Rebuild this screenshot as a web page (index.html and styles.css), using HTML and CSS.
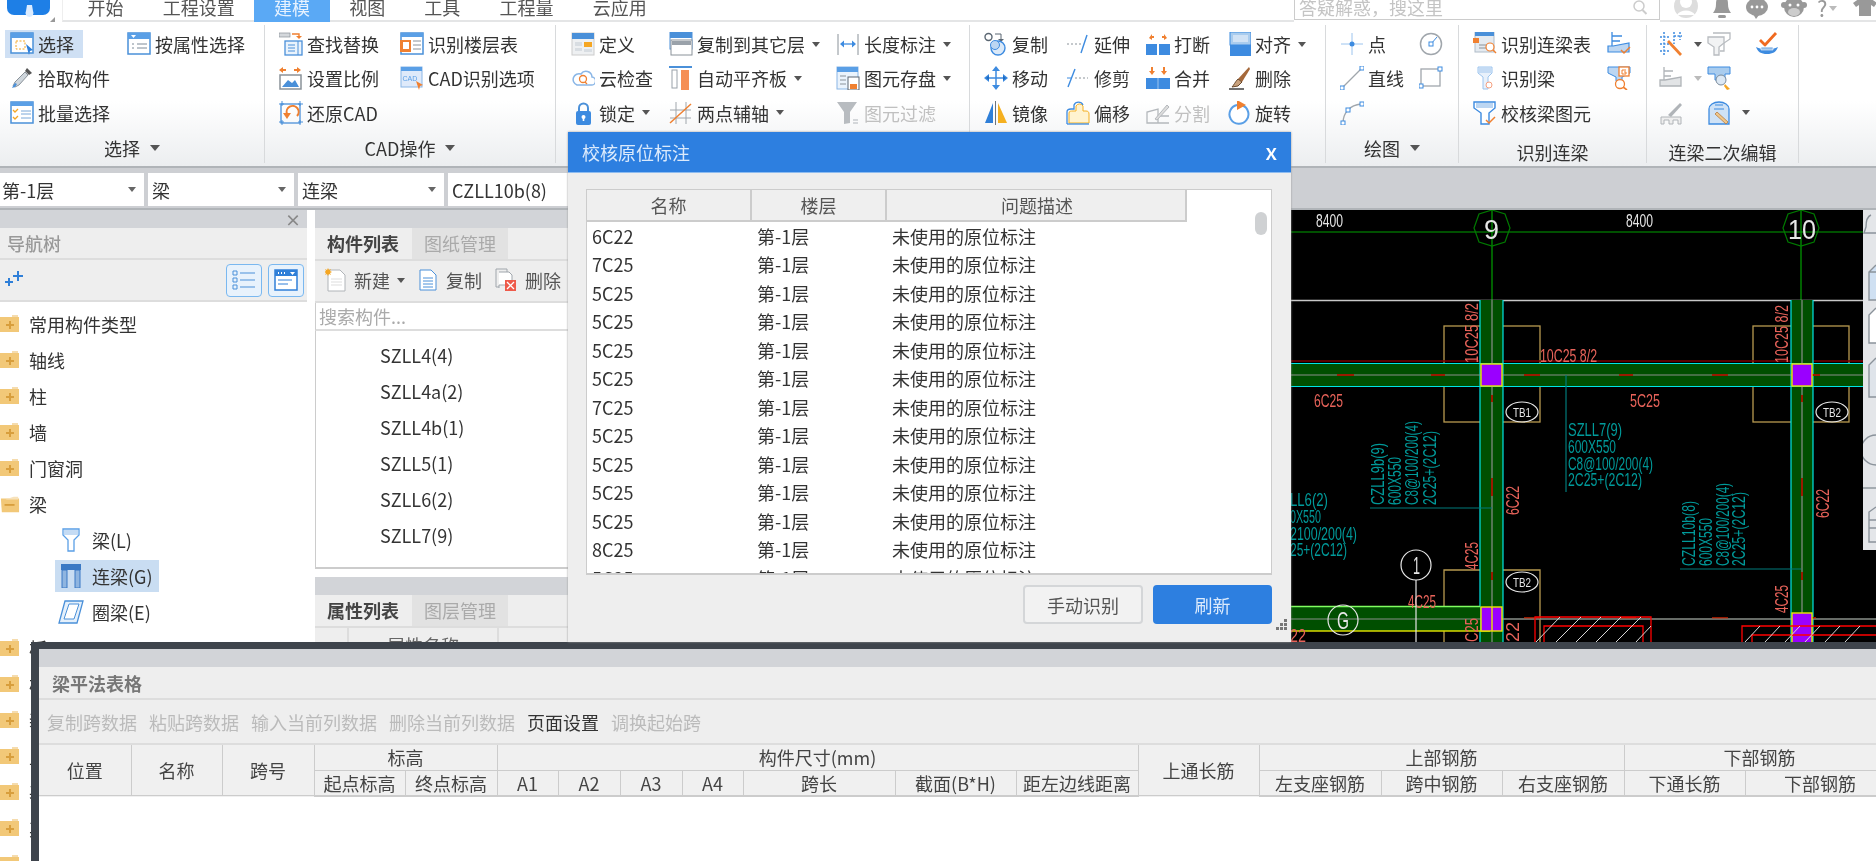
FILE: index.html
```html
<!DOCTYPE html>
<html lang="zh-CN">
<head>
<meta charset="utf-8">
<title>校核原位标注</title>
<link rel="stylesheet" href="styles.css">
</head>
<body>
<div class="app">
  <header class="menubar">
    <div class="logo-area">
      <div class="logo"><svg width="43" height="15" viewBox="0 0 43 15"><path d="M20 0h5l1 6a4 4 0 1 1-7 0z" fill="#dcecff"/></svg></div>
      <i class="grip"></i>
    </div>
    <nav class="tabs">
      <span class="tab">开始</span><span class="tab">工程设置</span><span class="tab active">建模</span><span class="tab">视图</span><span class="tab">工具</span><span class="tab">工程量</span><span class="tab">云应用</span>
    </nav>
    <div class="search">答疑解惑，搜这里
      <svg class="search-ico" width="16" height="16" viewBox="0 0 16 16"><circle cx="7" cy="6" r="5" fill="none" stroke="#ccc" stroke-width="1.5"/><path d="M10.5 10l4 4" stroke="#ccc" stroke-width="2"/></svg>
    </div>
    <div class="top-icons">
      <svg width="26" height="20" viewBox="0 0 26 20"><circle cx="13" cy="6" r="12" fill="#ddd"/><circle cx="13" cy="2" r="6" fill="#fff"/><path d="M4 15c3-6 15-6 18 0" fill="#fff"/></svg>
      <svg width="22" height="20" viewBox="0 0 22 20"><path d="M11-4c5 0 6 4 6 8s1 6 3 9H2c2-3 3-5 3-9s1-8 6-8z" fill="#999"/><rect x="7" y="15" width="8" height="3" rx="1.5" fill="#999"/></svg>
      <svg width="24" height="20" viewBox="0 0 24 20"><ellipse cx="12" cy="7" rx="11" ry="9" fill="#999"/><path d="M8 14l6 1-3 4z" fill="#999"/><circle cx="7" cy="7" r="1.4" fill="#fff"/><circle cx="12" cy="7" r="1.4" fill="#fff"/><circle cx="17" cy="7" r="1.4" fill="#fff"/></svg>
      <svg width="26" height="20" viewBox="0 0 26 20"><circle cx="13" cy="7" r="10" fill="#999"/><circle cx="3" cy="5" r="3" fill="#999"/><circle cx="23" cy="5" r="3" fill="#999"/><ellipse cx="13" cy="12" rx="6" ry="4" fill="#ccc"/><circle cx="9" cy="5" r="1.5" fill="#fff"/><circle cx="17" cy="5" r="1.5" fill="#fff"/></svg>
      <span class="help">?</span><i class="caret help-caret"></i>
      <svg class="shirt" width="24" height="20" viewBox="0 0 24 20"><path d="M7-2h10l7 5-3 4-3-2v11H6V5L3 7 0 3z" fill="#999"/></svg>
    </div>
  </header>

  <section class="ribbon">
    <div class="group g1">
      <div class="tools">
        <div class="tool on"><svg class="ico" viewBox="0 0 24 24"><rect x="1" y="1" width="22" height="20" fill="#fff" stroke="#4a90d9" stroke-width="1.5"/><rect x="1" y="1" width="22" height="5" fill="#5a9fe6"/><rect x="6" y="9" width="9" height="8" fill="none" stroke="#f5a623" stroke-dasharray="2 1.5"/><path d="M16 12l7 6-3 1-1 4z" fill="#2f7fd8"/></svg><span>选择</span></div>
        <div class="tool"><svg class="ico" viewBox="0 0 24 24"><path d="M17 2l5 5-3 2-4-4z" fill="#555"/><path d="M15 6l3 3-9 10-4 2-2-1 2-4z" fill="#cfd6dc" stroke="#8a9299"/><path d="M3 20l-1 2 3-1 2-3-2-1z" fill="#4a90d9"/></svg><span>拾取构件</span></div>
        <div class="tool"><svg class="ico" viewBox="0 0 24 24"><rect x="1" y="1" width="22" height="21" fill="#fff" stroke="#4a90d9" stroke-width="1.5"/><rect x="1" y="1" width="22" height="4" fill="#5a9fe6"/><path d="M3 9l2 2 3-3M3 16l2 2 3-3" fill="none" stroke="#f5a623" stroke-width="1.3"/><path d="M11 10h10M11 13h10M11 17h10" stroke="#7aa8d8"/></svg><span>批量选择</span></div>
        <div class="tool"><svg class="ico" viewBox="0 0 24 24"><rect x="1" y="1" width="22" height="21" fill="#fff" stroke="#4a90d9" stroke-width="1.5"/><rect x="1" y="1" width="22" height="6" fill="#5a9fe6"/><path d="M4 3h5l-2.500 3z" fill="#fff"/><path d="M5 12h2M5 16h2M10 12h10M10 16h10" stroke="#7c8a98"/></svg><span>按属性选择</span></div>
      </div>
      <div class="glabel">选择<i class="caret lg"></i></div>
    </div>
    <div class="group g2">
      <div class="tools">
        <div class="tool"><svg class="ico" viewBox="0 0 24 24"><rect x="0" y="1" width="11" height="4" fill="#d4d8dc" stroke="#8a9299" stroke-width=".7"/><path d="M13 2h7v3" fill="none" stroke="#f08030" stroke-width="1.400"/><path d="M17 4h6l-3 3z" fill="#f08030"/><rect x="6" y="9" width="17" height="14" fill="#eaf3fc" stroke="#4a90d9" stroke-width="1.300"/><path d="M9 13h7M9 16h7M9 19h7M19 9v14" stroke="#4a90d9"/></svg><span>查找替换</span></div>
        <div class="tool"><svg class="ico" viewBox="0 0 24 24"><path d="M0 4l4-3v2h3v2H4v2zM22 4l-4-3v2h-3v2h3v2z" fill="#f08030"/><rect x="1" y="9" width="21" height="14" fill="#fff" stroke="#8a9299" stroke-width="1.500"/><path d="M3 21l6-7 4 3 3-3 4 7z" fill="#4a90d9"/></svg><span>设置比例</span></div>
        <div class="tool"><svg class="ico" viewBox="0 0 24 24"><rect x="2" y="3" width="19" height="19" fill="none" stroke="#4a90d9" stroke-width="1.300"/><path d="M0 3h5M3 0v5M19 3h5M21 0v5M0 21h5M3 19v5M19 21h5M21 19v5" stroke="#4a90d9"/><path d="M8 13a6 6 0 1 1 10 2" fill="none" stroke="#f08030" stroke-width="2"/><path d="M4 12h8l-4 6z" fill="#f08030"/></svg><span>还原CAD</span></div>
        <div class="tool"><svg class="ico" viewBox="0 0 24 24"><rect x="1" y="1" width="22" height="21" fill="#fff" stroke="#4a90d9" stroke-width="1.500"/><rect x="1" y="1" width="22" height="4" fill="#5a9fe6"/><rect x="0" y="8" width="11" height="12" fill="#f08030"/><rect x="3" y="10" width="6" height="7" fill="#fff"/><path d="M13 9h8M13 13h8M13 17h8" stroke="#8a9299"/></svg><span>识别楼层表</span></div>
        <div class="tool"><svg class="ico" viewBox="0 0 24 24"><rect x="1" y="1" width="21" height="20" fill="#dfeafa" stroke="#8ab6e6"/><rect x="1" y="1" width="21" height="4" fill="#5a9fe6"/><text x="2.500" y="15" class="mini">CAD</text><path d="M16 15l7 4-3 1-1 4z" fill="#f08030"/></svg><span>CAD识别选项</span></div>
      </div>
      <div class="glabel">CAD操作<i class="caret lg"></i></div>
    </div>
    <div class="group g3">
      <div class="tools">
        <div class="tool"><svg class="ico" viewBox="0 0 24 24"><rect x="1" y="1" width="22" height="22" fill="#eef0f2" stroke="#ccc"/><rect x="1" y="1" width="22" height="6" fill="#4a90d9"/><rect x="4" y="10" width="7" height="4" fill="#d8dde2"/><rect x="13" y="10" width="8" height="5" fill="#f5a623"/><rect x="4" y="16" width="7" height="3" fill="#d8dde2"/><rect x="13" y="17" width="8" height="3" fill="#d8dde2"/></svg><span>定义</span></div>
        <div class="tool"><svg class="ico" viewBox="0 0 24 24"><path d="M6 19h14a4 4 0 0 0 1-8 6 6 0 0 0-11-3 5 5 0 0 0-4 11z" fill="#fff" stroke="#8ab6e6" stroke-width="1.500"/><circle cx="12" cy="13" r="3.500" fill="none" stroke="#f08030" stroke-width="1.300"/><path d="M14 16l2 2" stroke="#f08030" stroke-width="1.300"/></svg><span>云检查</span></div>
        <div class="tool"><svg class="ico" viewBox="0 0 24 24"><path d="M8 11V7a4.500 4.500 0 0 1 9 0v4" fill="none" stroke="#4a90d9" stroke-width="2"/><rect x="5" y="10" width="15" height="14" rx="2" fill="#3d8be0"/><circle cx="12.500" cy="16" r="2" fill="#fff"/><rect x="11.700" y="16" width="1.600" height="4" fill="#fff"/></svg><span>锁定</span><i class="caret"></i></div>
        <div class="tool"><svg class="ico" viewBox="0 0 24 24"><rect x="1" y="0" width="22" height="6" fill="#4a90d9"/><rect x="1" y="0" width="22" height="17" fill="none" stroke="#4a90d9"/><rect x="2" y="8" width="21" height="15" fill="#fff" stroke="#8a9299"/><rect x="3" y="9" width="19" height="4" fill="#9aa2aa"/></svg><span>复制到其它层</span><i class="caret"></i></div>
        <div class="tool"><svg class="ico" viewBox="0 0 24 24"><rect x="0" y="0" width="23" height="2" fill="#4a90d9"/><rect x="3" y="4" width="5" height="18" fill="#fff" stroke="#9aa2aa"/><rect x="12" y="4" width="8" height="20" fill="#f58f55"/></svg><span>自动平齐板</span><i class="caret"></i></div>
        <div class="tool"><svg class="ico" viewBox="0 0 24 24"><path d="M7 1v22M17 1v22M1 9h21M1 17h21" stroke="#a0a6ac"/><path d="M1 22L22 3" stroke="#f08030" stroke-width="1.500"/></svg><span>两点辅轴</span><i class="caret"></i></div>
        <div class="tool"><svg class="ico" viewBox="0 0 24 24"><path d="M2 2v21M22 2v21" stroke="#8a9299"/><path d="M6 12h12" stroke="#3d8be0" stroke-width="1.300"/><path d="M4 12l4-3.500v7zM20 12l-4-3.500v7z" fill="#3d8be0"/></svg><span>长度标注</span><i class="caret"></i></div>
        <div class="tool"><svg class="ico" viewBox="0 0 24 24"><rect x="1" y="1" width="21" height="22" fill="#eaf3fc" stroke="#8ab6e6"/><rect x="1" y="1" width="21" height="5" fill="#5a9fe6"/><path d="M4 10h6M4 14h6M4 18h6" stroke="#8a9299"/><rect x="12" y="11" width="11" height="13" fill="#fff" stroke="#5a6672"/><rect x="14" y="18" width="7" height="5" fill="#f08030"/></svg><span>图元存盘</span><i class="caret"></i></div>
        <div class="tool disabled"><svg class="ico" viewBox="0 0 24 24"><path d="M1 1h20l-7 10v11l-6 1V11z" fill="#b8bcc0"/><path d="M17 19h5M17 22h5" stroke="#c8ccd0" stroke-width="1.500"/></svg><span>图元过滤</span></div>
      </div>
    </div>
    <div class="group g4">
      <div class="tools">
        <div class="tool"><svg class="ico" viewBox="0 0 24 24"><circle cx="4.500" cy="5" r="3.500" fill="#fff" stroke="#5a6672" stroke-width="1.400"/><path d="M11 2h6v5" fill="none" stroke="#5a6672"/><path d="M14 7h6l-3 3z" fill="#5a6672"/><circle cx="14" cy="16" r="7" fill="#dbe9f8" stroke="#3d8be0" stroke-width="1.400"/><circle cx="11" cy="13" r="4.500" fill="#bcd6f2" stroke="#3d8be0"/></svg><span>复制</span></div>
        <div class="tool"><svg class="ico" viewBox="0 0 24 24"><path d="M12 12V3M12 12v9M3 12h18" stroke="#3d8be0" stroke-width="1.500"/><path d="M12 0l4 5H8zM12 24l-4-5h8zM0 12l5-4v8zM24 12l-5 4V8z" fill="#3d8be0"/><path d="M2 12l3-2.500v5zM22 12l-3 2.500v-5z" fill="#1f6cc4"/></svg><span>移动</span></div>
        <div class="tool"><svg class="ico" viewBox="0 0 24 24"><path d="M1 22L9 2v20z" fill="#2f7fd8"/><path d="M14 2v20h9z" fill="#f5b020"/><path d="M11.500 0v24" stroke="#6a7480"/></svg><span>镜像</span></div>
        <div class="tool"><svg class="ico" viewBox="0 0 24 24"><path d="M1 12h14" stroke="#8a9299" stroke-dasharray="2 2"/><path d="M15 21L21 3" stroke="#3d8be0" stroke-width="1.400"/></svg><span>延伸</span></div>
        <div class="tool"><svg class="ico" viewBox="0 0 24 24"><path d="M2 21L9 3" stroke="#3d8be0" stroke-width="1.400"/><path d="M1 12h5" stroke="#3d8be0"/><path d="M9 12h13" stroke="#8a9299" stroke-dasharray="2 2"/></svg><span>修剪</span></div>
        <div class="tool"><svg class="ico" viewBox="0 0 24 24"><path d="M3 22V12c0-2 2-2 4-2h3V5a4 4 0 0 1 7 0v5h3c2 0 3 1 3 3v9z" fill="#fff3d0" stroke="#f5b020" stroke-width="1"/><path d="M1 23V11c0-2 2-3 4-3h3V4a5 5 0 0 1 9 0" fill="none" stroke="#3d8be0" stroke-width="1.300"/><path d="M1 23h22" stroke="#3d8be0" stroke-width="1.300"/></svg><span>偏移</span></div>
        <div class="tool"><svg class="ico" viewBox="0 0 24 24"><path d="M3 6l3-4v2h2v2H6v2zM21 6l-3-4v2h-2v2h2v2z" fill="#f08030"/><rect x="0" y="12" width="11" height="11" fill="#3d8be0"/><rect x="13" y="12" width="11" height="11" fill="#3d8be0"/></svg><span>打断</span></div>
        <div class="tool"><svg class="ico" viewBox="0 0 24 24"><path d="M5 1v4H3l3 4 3-4H7V1zM17 1v4h-2l3 4 3-4h-2V1z" fill="#f08030"/><rect x="0" y="12" width="24" height="11" fill="#3d8be0"/><path d="M12 12v11" stroke="#9cc4ee"/></svg><span>合并</span></div>
        <div class="tool disabled"><svg class="ico" viewBox="0 0 24 24"><path d="M1 22V11l11-3v14zM1 22h22M12 15h11" fill="none" stroke="#b4b8bc" stroke-width="1.300"/><path d="M9 18L21 4l2 2L11 19z" fill="#ddd" stroke="#b4b8bc"/></svg><span>分割</span></div>
        <div class="tool"><svg class="ico" viewBox="0 0 24 24"><rect x="3" y="12" width="21" height="12" fill="#3d8be0"/><rect x="3" y="0" width="21" height="13" fill="#a9ccee" stroke="#3d8be0"/><rect x="6" y="3" width="15" height="7" fill="#d0e2f5"/></svg><span>对齐</span><i class="caret"></i></div>
        <div class="tool"><svg class="ico" viewBox="0 0 24 24"><path d="M22 1L11 13l4 3L23 3z" fill="#a5683a"/><path d="M11 13l4 3-4 4-6 1c2-2 3-5 6-8z" fill="#c9a27e" stroke="#6b4a2c"/><path d="M2 23h15" stroke="#333" stroke-width="1.400"/></svg><span>删除</span></div>
        <div class="tool"><svg class="ico" viewBox="0 0 24 24"><path d="M10 4a9.500 9.500 0 1 0 5 .3" fill="#fff" stroke="#5a9fe6" stroke-width="2"/><path d="M10-1l9 5-9 5z" fill="#f08030"/></svg><span>旋转</span></div>
      </div>
    </div>
    <div class="group g5">
      <div class="tools">
        <div class="tool"><svg class="ico" viewBox="0 0 24 24"><path d="M1 12h22M12 1v22" stroke="#9cc4ee"/><circle cx="12" cy="12" r="2.500" fill="#3d8be0"/></svg><span>点</span></div>
        <div class="tool"><svg class="ico" viewBox="0 0 24 24"><path d="M2 22L22 2" stroke="#a0a6ac" stroke-width="1.300"/><rect x="0" y="20" width="4" height="4" fill="#fff" stroke="#3d8be0"/><rect x="20" y="0" width="4" height="4" fill="#fff" stroke="#3d8be0"/></svg><span>直线</span></div>
        <div class="tool"><svg class="ico" viewBox="0 0 24 24"><path d="M3 22C3 12 10 4 21 3" fill="none" stroke="#a0a6ac" stroke-width="1.300"/><rect x="1" y="20" width="4" height="4" fill="#fff" stroke="#3d8be0"/><rect x="6" y="7" width="4" height="4" fill="#fff" stroke="#3d8be0"/><rect x="20" y="1" width="4" height="4" fill="#fff" stroke="#3d8be0"/></svg></div>
        <div class="tool"><svg class="ico" viewBox="0 0 24 24"><circle cx="12" cy="12" r="10.500" fill="#fff" stroke="#a0a6ac" stroke-width="1.500"/><path d="M12 12l6-7" stroke="#3d8be0"/><rect x="10" y="10" width="4" height="4" fill="#fff" stroke="#3d8be0"/></svg></div>
        <div class="tool"><svg class="ico" viewBox="0 0 24 24"><rect x="2" y="3" width="19" height="17" fill="none" stroke="#a0a6ac" stroke-width="1.300"/><rect x="0" y="18" width="4" height="4" fill="#fff" stroke="#3d8be0"/><rect x="19" y="1" width="4" height="4" fill="#fff" stroke="#3d8be0"/></svg></div>
      </div>
      <div class="glabel">绘图<i class="caret lg"></i></div>
    </div>
    <div class="group g6">
      <div class="tools">
        <div class="tool"><svg class="ico" viewBox="0 0 24 24"><rect x="2" y="0" width="19" height="20" fill="#e4eaf0" stroke="#b0bcc8"/><rect x="2" y="0" width="19" height="4" fill="#4a90d9"/><rect x="0" y="6" width="6" height="5" fill="#f08030"/><path d="M6 13h9M6 16h9" stroke="#8a9299"/><circle cx="17" cy="15" r="4" fill="#fff" stroke="#f08030" stroke-width="1.200"/><path d="M20 18l3 3" stroke="#f08030" stroke-width="1.400"/></svg><span>识别连梁表</span></div>
        <div class="tool"><svg class="ico" viewBox="0 0 24 24"><path d="M5 1h14v6l-4 4v12H10V11L5 7z" fill="#e8f1fb" stroke="#9cc4ee"/><path d="M6 2h12v5H6z" fill="#c4dbf4"/><circle cx="16" cy="19" r="3" fill="#fff" stroke="#f5a080"/></svg><span>识别梁</span></div>
        <div class="tool"><svg class="ico" viewBox="0 0 24 24"><path d="M1 1h21v6l-6 5v11H8V12L1 7z" fill="#fff" stroke="#3d8be0" stroke-width="1.400"/><path d="M3 2h17v5H3z" fill="#bcd6f2"/><path d="M13 19l3 3 6-6" fill="none" stroke="#f08030" stroke-width="1.500"/></svg><span>校核梁图元</span></div>
        <div class="tool"><svg class="ico" viewBox="0 0 24 24"><path d="M5 0v14M5 4h10M5 9h8" fill="none" stroke="#3d8be0" stroke-width="1.300"/><path d="M1 14l5 0 16-3v9H1z" fill="#bcd6f2" stroke="#3d8be0" stroke-width="1.200"/><path d="M14 18l3 3 6-6" fill="none" stroke="#f08030" stroke-width="1.500"/></svg></div>
        <div class="tool"><svg class="ico" viewBox="0 0 24 24"><path d="M1 1h22v6l-8 4v4H9v-4L1 7z" fill="#bcd6f2" stroke="#3d8be0"/><rect x="12" y="1" width="10" height="9" fill="#fff" stroke="#f08030" stroke-width="1.300"/><path d="M19 4h-4v4h4V6h-2" fill="none" stroke="#f08030"/><circle cx="13" cy="18" r="4.500" fill="#fff" stroke="#f08030" stroke-width="1.300"/><path d="M16 21l4 3" stroke="#f08030" stroke-width="1.600"/></svg></div>
      </div>
      <div class="glabel plain">识别连梁</div>
    </div>
    <div class="group g7">
      <div class="tools">
        <div class="tool"><svg class="ico" viewBox="0 0 24 24"><path d="M1 5h9M1 12h9M1 19h9M5 0v24M15 0v12M21 0v8M15 4h8" stroke="#3d8be0" stroke-dasharray="2 1.500" stroke-width="1.500"/><path d="M10 8l13 14-2 2L8 10z" fill="#f08030"/></svg><i class="caret"></i></div>
        <div class="tool"><svg class="ico" viewBox="0 0 24 24"><path d="M5 1v14M5 5h9M5 10h7" fill="none" stroke="#b0b4b8" stroke-width="1.300"/><path d="M1 14h5l16-3v9H1z" fill="#e2e4e6" stroke="#b0b4b8" stroke-width="1.300"/></svg><i class="caret light"></i></div>
        <div class="tool"><svg class="ico" viewBox="0 0 24 24"><path d="M2 16h20v7h-3v-4h-5v4h-4v-4H5v4H2z" fill="#eee" stroke="#b0b4b8"/><path d="M9 14L21 2l2 2L12 16z" fill="#b0b4b8"/></svg></div>
        <div class="tool"><svg class="ico" viewBox="0 0 24 24"><path d="M6 1h17v6l-6 4v8h-4" fill="#fff" stroke="#b8bcc0" stroke-width="1.300"/><path d="M1 5h16v6l-5 4v8H7v-8L1 11z" fill="#f2f3f4" stroke="#b8bcc0" stroke-width="1.300"/></svg></div>
        <div class="tool"><svg class="ico" viewBox="0 0 24 24"><path d="M1 1h22v7h-5v6H8V8H1z" fill="#a9ccee" stroke="#3d8be0"/><circle cx="14" cy="14" r="5" fill="#dce8f4" stroke="#7a8a9a"/><path d="M18 18l5 5-3 1-3-4z" fill="#f5a623"/></svg></div>
        <div class="tool"><svg class="ico" viewBox="0 0 24 24"><path d="M2 23V8a10 7 0 0 1 20 0v15z" fill="#cfe2f6" stroke="#3d8be0" stroke-width="1.300"/><path d="M7 8h10M8 4h8" stroke="#3d8be0"/><path d="M10 11l11 10-2 2L8 13z" fill="#f0c78a" stroke="#b07030" stroke-width=".7"/></svg><i class="caret"></i></div>
        <div class="tool"><svg class="ico" viewBox="0 0 24 24"><path d="M5 8l5 5L21 1" fill="none" stroke="#f06a20" stroke-width="2.800"/><path d="M1 15c6 3 16 3 22 0-2 5-5 7-11 7S3 20 1 15z" fill="#3d8be0"/><path d="M6 15h12v3H6z" fill="#8fb9e6" stroke="#fff" stroke-width=".6"/></svg></div>
      </div>
      <div class="glabel plain">连梁二次编辑</div>
    </div>
  </section>

  <div class="combo-row">
    <div class="combo c1"><span>第-1层</span><i class="caret"></i></div>
    <div class="combo c2"><span>梁</span><i class="caret"></i></div>
    <div class="combo c3"><span>连梁</span><i class="caret"></i></div>
    <div class="combo c4"><span>CZLL10b(8)</span></div>
  </div>

  <main class="workspace">
    <aside class="nav-panel">
      <div class="pane-head"><span class="close">×</span></div>
      <div class="pane-title">导航树</div>
      <div class="nav-tools">
        <svg class="sparkle" width="18" height="18" viewBox="0 0 18 18"><path d="M12 0h2v4h4v2h-4v4h-2V6H8V4h4zM3 7h2v3h3v2H5v3H3v-3H0v-2h3z" fill="#2f7fd8"/></svg>
        <span class="view-btn"><svg width="24" height="22" viewBox="0 0 24 22"><path d="M1 2h4v4H1zM1 9h4v4H1zM1 16h4v4H1z" fill="none" stroke="#4a90d9"/><path d="M8 4h15M8 11h15M8 18h15" stroke="#4a90d9"/></svg></span>
        <span class="view-btn"><svg width="24" height="22" viewBox="0 0 24 22"><rect x="1" y="1" width="22" height="20" fill="#fff" stroke="#2f7fd8" stroke-width="1.500"/><rect x="1" y="1" width="22" height="6" fill="#2f7fd8"/><path d="M4 3h1v2H4zM7 3h1v2H7zM10 3h1v2h-1zM16 3h5l-2.500 3z" fill="#fff"/><path d="M4 11h14M4 15h10" stroke="#2f7fd8"/></svg></span>
      </div>
      <ul class="tree">
        <li class="node"><svg class="folder" viewBox="0 0 20 20"><path d="M0 3h19v15H0z" fill="#f2c878"/><path d="M12 1h6v2h-6z" fill="#f5dcae"/><path d="M9 7h2v3h3v2h-3v3H9v-3H6v-2h3z" fill="#d89e3c"/></svg>常用构件类型</li>
        <li class="node"><svg class="folder" viewBox="0 0 20 20"><path d="M0 3h19v15H0z" fill="#f2c878"/><path d="M12 1h6v2h-6z" fill="#f5dcae"/><path d="M9 7h2v3h3v2h-3v3H9v-3H6v-2h3z" fill="#d89e3c"/></svg>轴线</li>
        <li class="node"><svg class="folder" viewBox="0 0 20 20"><path d="M0 3h19v15H0z" fill="#f2c878"/><path d="M12 1h6v2h-6z" fill="#f5dcae"/><path d="M9 7h2v3h3v2h-3v3H9v-3H6v-2h3z" fill="#d89e3c"/></svg>柱</li>
        <li class="node"><svg class="folder" viewBox="0 0 20 20"><path d="M0 3h19v15H0z" fill="#f2c878"/><path d="M12 1h6v2h-6z" fill="#f5dcae"/><path d="M9 7h2v3h3v2h-3v3H9v-3H6v-2h3z" fill="#d89e3c"/></svg>墙</li>
        <li class="node"><svg class="folder" viewBox="0 0 20 20"><path d="M0 3h19v15H0z" fill="#f2c878"/><path d="M12 1h6v2h-6z" fill="#f5dcae"/><path d="M9 7h2v3h3v2h-3v3H9v-3H6v-2h3z" fill="#d89e3c"/></svg>门窗洞</li>
        <li class="node"><svg class="folder" viewBox="0 0 22 20"><path d="M1 4h20v15H2z" fill="#f2c878"/><path d="M0 7l15-5h5v3H6z" fill="#f7e2bb"/><path d="M5 10h11v2H5z" fill="#d89e3c"/></svg>梁</li>
        <li class="leaf"><svg class="leaf-ico" viewBox="0 0 22 24"><path d="M3 1h16v6l-5 5v11H8V12L3 7z" fill="#fff" stroke="#5a9fe6" stroke-width="1.300"/><path d="M4 2h14v5H4z" fill="#c4dbf4"/></svg>梁(L)</li>
        <li class="leaf sel"><svg class="leaf-ico" viewBox="0 0 22 24"><path d="M1 0h20v6H1z" fill="#3b79c4"/><path d="M2 6h5v18H2zM15 6h5v18h-5z" fill="#8fb5e0" stroke="#3b79c4"/></svg>连梁(G)</li>
        <li class="leaf"><svg class="leaf-ico wide" viewBox="0 0 26 24"><path d="M7 1h18l-6 22H1z" fill="#e5f0fb" stroke="#4a90d9" stroke-width="1.300"/><path d="M11 4h10l-5 15H6z" fill="#fff" stroke="#4a90d9"/></svg>圈梁(E)</li>
        <li class="node"><svg class="folder" viewBox="0 0 20 20"><path d="M0 3h19v15H0z" fill="#f2c878"/><path d="M12 1h6v2h-6z" fill="#f5dcae"/><path d="M9 7h2v3h3v2h-3v3H9v-3H6v-2h3z" fill="#d89e3c"/></svg>板</li>
        <li class="node"><svg class="folder" viewBox="0 0 20 20"><path d="M0 3h19v15H0z" fill="#f2c878"/><path d="M12 1h6v2h-6z" fill="#f5dcae"/><path d="M9 7h2v3h3v2h-3v3H9v-3H6v-2h3z" fill="#d89e3c"/></svg>楼梯</li>
        <li class="node"><svg class="folder" viewBox="0 0 20 20"><path d="M0 3h19v15H0z" fill="#f2c878"/><path d="M12 1h6v2h-6z" fill="#f5dcae"/><path d="M9 7h2v3h3v2h-3v3H9v-3H6v-2h3z" fill="#d89e3c"/></svg>装修</li>
        <li class="node"><svg class="folder" viewBox="0 0 20 20"><path d="M0 3h19v15H0z" fill="#f2c878"/><path d="M12 1h6v2h-6z" fill="#f5dcae"/><path d="M9 7h2v3h3v2h-3v3H9v-3H6v-2h3z" fill="#d89e3c"/></svg>土方</li>
        <li class="node"><svg class="folder" viewBox="0 0 20 20"><path d="M0 3h19v15H0z" fill="#f2c878"/><path d="M12 1h6v2h-6z" fill="#f5dcae"/><path d="M9 7h2v3h3v2h-3v3H9v-3H6v-2h3z" fill="#d89e3c"/></svg>基础</li>
        <li class="node"><svg class="folder" viewBox="0 0 20 20"><path d="M0 3h19v15H0z" fill="#f2c878"/><path d="M12 1h6v2h-6z" fill="#f5dcae"/><path d="M9 7h2v3h3v2h-3v3H9v-3H6v-2h3z" fill="#d89e3c"/></svg>其它</li>
        <li class="node"><svg class="folder" viewBox="0 0 20 20"><path d="M0 3h19v15H0z" fill="#f2c878"/><path d="M12 1h6v2h-6z" fill="#f5dcae"/><path d="M9 7h2v3h3v2h-3v3H9v-3H6v-2h3z" fill="#d89e3c"/></svg>自定义</li>
      </ul>
    </aside>

    <section class="mid-panel">
      <div class="pane-head"></div>
      <div class="ptabs"><span class="ptab active">构件列表</span><span class="ptab">图纸管理</span></div>
      <div class="list-tools">
        <span class="lt new"><svg width="21" height="24" viewBox="0 0 21 24"><path d="M3 2h12l5 5v16H3z" fill="#fff" stroke="#b0b4b8"/><path d="M6 11h11M6 14h11M6 17h11" stroke="#ddd"/><path d="M3 0l1 2 2-1-1 2 2 1-2 1 1 2-2-1-1 2-1-2-2 1 1-2-2-1 2-1-1-2 2 1z" fill="#f5a623"/></svg><b>新建</b><i class="caret"></i></span>
        <span class="lt copy"><svg width="18" height="24" viewBox="0 0 18 24"><path d="M1 2h11l5 5v15H1z" fill="#fff" stroke="#4a90d9"/><path d="M4 10h10M4 13h10M4 16h10M4 19h10" stroke="#4a90d9"/></svg><b>复制</b></span>
        <span class="lt del"><svg width="22" height="24" viewBox="0 0 22 24"><path d="M1 1h11v3M1 1v18h3" fill="none" stroke="#a0a6ac"/><path d="M4 4h10l3 3v10H4v3" fill="#fff" stroke="#a0a6ac"/><rect x="10" y="12" width="11" height="11" fill="#ee5a4a"/><path d="M12 14l7 7M19 14l-7 7" stroke="#fff" stroke-width="1.300"/></svg><b>删除</b></span>
      </div>
      <div class="list-search">搜索构件...</div>
      <ul class="clist">
        <li>SZLL4(4)</li><li>SZLL4a(2)</li><li>SZLL4b(1)</li><li>SZLL5(1)</li><li>SZLL6(2)</li><li>SZLL7(9)</li>
      </ul>
      <div class="pane-head second"></div>
      <div class="ptabs"><span class="ptab active">属性列表</span><span class="ptab">图层管理</span></div>
      <div class="prop-head"><span class="p0"></span><span class="p1">属性名称</span><span class="p2">属性值</span></div>
    </section>

    <section class="cad">
      <svg class="cad-svg" viewBox="1290 210 586 432" width="586" height="432">
        <rect x="1290" y="210" width="586" height="432" fill="#000"/>
        <g class="c-green"><path d="M1290 232H1876M1492 210V300M1801 210V300"/><polygon points="1492,210 1505,214 1510,228 1505,242 1492,246 1479,242 1474,228 1479,214" fill="none" stroke="#007a00"/><polygon points="1801,210 1814,214 1819,228 1814,242 1801,246 1788,242 1783,228 1788,214" fill="none" stroke="#007a00"/></g>
        <text x="1484" y="239" class="c-white big" textLength="15" lengthAdjust="spacingAndGlyphs">9</text><text x="1788" y="239" class="c-white big" textLength="28" lengthAdjust="spacingAndGlyphs">10</text>
        <path d="M1290 300.500H1863" stroke="#c8c8c8" stroke-width="1.400"/>
        <rect x="1444" y="326" width="96" height="96" class="c-tan"/><rect x="1753" y="326" width="96" height="96" class="c-tan"/><path d="M1444 642V570H1540V642" class="c-tan"/>
        <path d="M1290 361H1876" stroke="#7a0000" stroke-width="1.400"/>
        <rect x="1290" y="364" width="586" height="23" fill="#004f00"/>
        <rect x="1480" y="300" width="23" height="342" fill="#004f00"/><rect x="1791" y="300" width="22" height="342" fill="#004f00"/>
        <path d="M1290 363.500H1876M1290 386.500H1876M1480 300V642M1503 300V642M1791 300V642M1813 300V642" stroke="#00e5e5" stroke-width="1.200" fill="none"/>
        <path d="M1290 375H1876M1492 300V642M1802 300V642M1290 619H1876" stroke="#8a8f8a" stroke-width="1.200"/>
        <path d="M1337 375H1354M1431 375H1445M1524 375H1540M1619 375H1633M1712 375H1728M1812 375H1820M1492 395V402M1492 478V496M1802 395V402M1802 478V496M1492 572V580M1802 572V580M1430 618H1446M1524 618H1540M1620 618H1636M1712 618H1728M1800 618H1816" stroke="#9a1a00" stroke-width="2"/>
        <rect x="1481" y="364" width="21" height="22" fill="#9a00ff" stroke="#e8e800" stroke-width="1.400"/><rect x="1792" y="364" width="20" height="22" fill="#9a00ff" stroke="#e8e800" stroke-width="1.400"/>
        <rect x="1290" y="606" width="190" height="25" fill="#004f00"/><path d="M1290 606.500H1480" stroke="#80ff60" stroke-width="1.600"/><path d="M1290 631H1490" stroke="#d8d800" stroke-width="1.400"/>
        <path d="M1290 619H1876" stroke="#8a8f8a" stroke-width="1.200"/>
        <rect x="1481" y="607" width="21" height="24" fill="#9a00ff" stroke="#e8e800" stroke-width="1.400"/><path d="M1492 607V631" stroke="#e8e800" stroke-width="1.400"/>
        <rect x="1792" y="613" width="20" height="32" fill="#9a00ff" stroke="#e8e800" stroke-width="1.400"/>
        <g fill="none" stroke="#ff0000" stroke-width="1.300"><path d="M1535 642V617H1651V642M1544 642V626H1643V642M1742 642V626H1876M1752 642V635H1876"/></g>
        <path d="M1536 642L1560 617M1556 642L1581 617M1576 642L1601 617M1596 642L1621 617M1616 642L1641 617M1636 642L1651 626M1745 642L1760 626M1765 642L1780 626M1785 642L1800 626M1805 642L1820 626M1825 642L1840 626M1845 642L1860 626" stroke="#d8d8d8" stroke-width="1"/>
        <g class="c-white"><text x="1316" y="227" textLength="27" lengthAdjust="spacingAndGlyphs">8400</text><text x="1626" y="227" textLength="27" lengthAdjust="spacingAndGlyphs">8400</text></g>
        <g class="c-red">
          <text x="1314" y="407" textLength="29" lengthAdjust="spacingAndGlyphs">6C25</text>
          <text x="1630" y="407" textLength="30" lengthAdjust="spacingAndGlyphs">5C25</text>
          <text x="1540" y="362" textLength="57" lengthAdjust="spacingAndGlyphs">10C25 8/2</text>
          <text x="1408" y="608" textLength="28" lengthAdjust="spacingAndGlyphs">4C25</text>
          <text transform="translate(1478 363) rotate(-90)" textLength="60" lengthAdjust="spacingAndGlyphs">10C25 8/2</text>
          <text transform="translate(1788 363) rotate(-90)" textLength="58" lengthAdjust="spacingAndGlyphs">10C25 8/2</text>
          <text transform="translate(1519 515) rotate(-90)" textLength="29" lengthAdjust="spacingAndGlyphs">6C22</text>
          <text transform="translate(1829 518) rotate(-90)" textLength="29" lengthAdjust="spacingAndGlyphs">6C22</text>
          <text transform="translate(1478 570) rotate(-90)" textLength="28" lengthAdjust="spacingAndGlyphs">4C25</text>
          <text transform="translate(1788 613) rotate(-90)" textLength="28" lengthAdjust="spacingAndGlyphs">4C25</text>
          <text transform="translate(1478 642) rotate(-90)" textLength="24" lengthAdjust="spacingAndGlyphs">C25</text>
          <text transform="translate(1519 642) rotate(-90)" textLength="20" lengthAdjust="spacingAndGlyphs">22</text>
          <text x="1290" y="642" textLength="16" lengthAdjust="spacingAndGlyphs">22</text>
        </g>
        <g class="c-teal">
          <text x="1568" y="436" textLength="54" lengthAdjust="spacingAndGlyphs">SZLL7(9)</text>
          <text x="1568" y="453" textLength="48" lengthAdjust="spacingAndGlyphs">600X550</text>
          <text x="1568" y="470" textLength="85" lengthAdjust="spacingAndGlyphs">C8@100/200(4)</text>
          <text x="1568" y="486" textLength="74" lengthAdjust="spacingAndGlyphs">2C25+(2C12)</text>
          <text x="1290" y="506" textLength="38" lengthAdjust="spacingAndGlyphs">LL6(2)</text>
          <text x="1290" y="523" textLength="31" lengthAdjust="spacingAndGlyphs">0X550</text>
          <text x="1290" y="540" textLength="67" lengthAdjust="spacingAndGlyphs">2100/200(4)</text>
          <text x="1290" y="556" textLength="57" lengthAdjust="spacingAndGlyphs">25+(2C12)</text>
          <text transform="translate(1384 505) rotate(-90)" textLength="62" lengthAdjust="spacingAndGlyphs">CZLL9b(9)</text>
          <text transform="translate(1401 505) rotate(-90)" textLength="48" lengthAdjust="spacingAndGlyphs">600X550</text>
          <text transform="translate(1418 505) rotate(-90)" textLength="84" lengthAdjust="spacingAndGlyphs">C8@100/200(4)</text>
          <text transform="translate(1436 505) rotate(-90)" textLength="74" lengthAdjust="spacingAndGlyphs">2C25+(2C12)</text>
          <text transform="translate(1695 566) rotate(-90)" textLength="65" lengthAdjust="spacingAndGlyphs">CZLL10b(8)</text>
          <text transform="translate(1712 566) rotate(-90)" textLength="48" lengthAdjust="spacingAndGlyphs">600X550</text>
          <text transform="translate(1729 566) rotate(-90)" textLength="83" lengthAdjust="spacingAndGlyphs">C8@100/200(4)</text>
          <text transform="translate(1745 566) rotate(-90)" textLength="74" lengthAdjust="spacingAndGlyphs">2C25+(2C12)</text>
        </g>
        <path d="M1566 375V492M1370 508H1492M1680 569H1801" stroke="#007a7a" stroke-width="1.200"/>
        <g fill="none" stroke="#e6e6e6" stroke-width="1.200"><ellipse cx="1522" cy="412" rx="16" ry="10"/><ellipse cx="1832" cy="412" rx="16" ry="10"/><ellipse cx="1522" cy="582" rx="16" ry="10"/><ellipse cx="1416" cy="565" rx="15" ry="15"/><ellipse cx="1343" cy="620" rx="15" ry="15"/><path d="M1416 580V642"/></g>
        <g class="c-white small"><text x="1513" y="417" textLength="18" lengthAdjust="spacingAndGlyphs">TB1</text><text x="1823" y="417" textLength="18" lengthAdjust="spacingAndGlyphs">TB2</text><text x="1513" y="587" textLength="18" lengthAdjust="spacingAndGlyphs">TB2</text><text x="1413" y="574" class="mid" textLength="7" lengthAdjust="spacingAndGlyphs">1</text><text x="1337" y="629" class="mid" textLength="12" lengthAdjust="spacingAndGlyphs">G</text></g>
      </svg>
      <div class="side-tools">
        <svg width="13" height="340" viewBox="0 0 13 340"><g fill="none" stroke="#8a929a" stroke-width="1.400"><path d="M8 5c-5 2-5 8-5 12L1 23h12"/><path d="M13 55L6 62v28h7M6 62h7" fill="#cfe0f2"/><path d="M13 98L6 105v28h7" fill="#fff"/><path d="M13 148L6 155v32h7" fill="#dfe4ea"/><path d="M13 225a15 15 0 0 0 0 30"/><path d="M0 278h13"/><path d="M13 297L6 302v30h7M6 310h7M6 318h7"/></g></svg>
      </div>
    </section>
  </main>

  <section class="grid-panel">
    <div class="pane-head tall"></div>
    <div class="gp-title">梁平法表格</div>
    <div class="gp-tools"><span class="off">复制跨数据</span><span class="off">粘贴跨数据</span><span class="off">输入当前列数据</span><span class="off">删除当前列数据</span><span>页面设置</span><span class="off">调换起始跨</span></div>
    <table class="gp-table">
      <colgroup><col class="w92"><col class="w91"><col class="w92"><col class="w91"><col class="w92"><col class="w61"><col class="w62"><col class="w62"><col class="w61"><col class="w152"><col class="w121"><col class="w122"><col class="w121"><col class="w122"><col class="w121"><col class="w122"><col class="w121"><col class="w150"></colgroup>
      <thead>
        <tr><th rowspan="2">位置</th><th rowspan="2">名称</th><th rowspan="2">跨号</th><th colspan="2">标高</th><th colspan="7">构件尺寸(mm)</th><th rowspan="2">上通长筋</th><th colspan="3">上部钢筋</th><th colspan="2">下部钢筋</th></tr>
        <tr><th>起点标高</th><th>终点标高</th><th>A1</th><th>A2</th><th>A3</th><th>A4</th><th>跨长</th><th>截面(B*H)</th><th>距左边线距离</th><th>左支座钢筋</th><th>跨中钢筋</th><th>右支座钢筋</th><th>下通长筋</th><th>下部钢筋</th></tr>
      </thead>
    </table>
  </section>

  <section class="dialog">
    <div class="dlg-title"><span>校核原位标注</span><span class="dlg-x">x</span></div>
    <div class="dlg-body">
      <div class="dlg-list">
        <div class="drow dhead"><span>名称</span><span>楼层</span><span>问题描述</span></div>
        <div class="drow"><span>6C22</span><span>第-1层</span><span>未使用的原位标注</span></div>
        <div class="drow"><span>7C25</span><span>第-1层</span><span>未使用的原位标注</span></div>
        <div class="drow"><span>5C25</span><span>第-1层</span><span>未使用的原位标注</span></div>
        <div class="drow"><span>5C25</span><span>第-1层</span><span>未使用的原位标注</span></div>
        <div class="drow"><span>5C25</span><span>第-1层</span><span>未使用的原位标注</span></div>
        <div class="drow"><span>5C25</span><span>第-1层</span><span>未使用的原位标注</span></div>
        <div class="drow"><span>7C25</span><span>第-1层</span><span>未使用的原位标注</span></div>
        <div class="drow"><span>5C25</span><span>第-1层</span><span>未使用的原位标注</span></div>
        <div class="drow"><span>5C25</span><span>第-1层</span><span>未使用的原位标注</span></div>
        <div class="drow"><span>5C25</span><span>第-1层</span><span>未使用的原位标注</span></div>
        <div class="drow"><span>5C25</span><span>第-1层</span><span>未使用的原位标注</span></div>
        <div class="drow"><span>8C25</span><span>第-1层</span><span>未使用的原位标注</span></div>
        <div class="drow"><span>5C25</span><span>第-1层</span><span>未使用的原位标注</span></div>
        <i class="thumb"></i>
      </div>
      <div class="dlg-btns"><button class="btn">手动识别</button><button class="btn primary">刷新</button></div>
      <svg class="dlg-grip" width="12" height="12" viewBox="0 0 12 12"><path d="M9 0h3v3H9zM5 4h3v3H5zM9 4h3v3H9zM1 8h3v3H1zM5 8h3v3H5zM9 8h3v3H9z" fill="#777"/></svg>
    </div>
  </section>
</div>
</body>
</html>
```
FILE: styles.css
```css
* { box-sizing: border-box; }
html, body { margin: 0; padding: 0; background: #fff; }
ul { list-style: none; margin: 0; padding: 0; }
i { font-style: normal; display: inline-block; }
b { font-weight: 400; }

.app {
  position: relative;
  width: 1876px;
  height: 861px;
  overflow: hidden;
  background: #fff;
  color: #333;
  font-family: "Noto Sans CJK SC", "Noto Sans", sans-serif;
  font-size: 18px;
  line-height: 24px;
  filter: blur(0.4px);
}

.caret {
  width: 0; height: 0;
  border-left: 4px solid transparent;
  border-right: 4px solid transparent;
  border-top: 5px solid #555;
  margin-left: 7px;
}
.caret.lg { border-left-width: 5px; border-right-width: 5px; border-top-width: 6px; margin-left: 10px; }
.caret.light { border-top-color: #bbb; }

/* menu */
.menubar { display: flex; height: 22px; }
.logo-area { width: 62px; position: relative; flex: none; padding-left: 7px; }
.logo { width: 43px; height: 15px; border-radius: 0 0 7px 7px; background: #1e7fe6; }
.grip { position: absolute; left: 50px; top: 17px; border-left: 5px solid transparent; border-bottom: 5px solid #999; }
.tabs { display: flex; flex: none; width: 1232px; height: 22px; padding-left: 5px; border-bottom: 2px solid #e4e5e6; border-left: 1px solid #eee; }
.tab { padding: 0 19.6px; height: 20px; line-height: 15px; color: #555; }
.tab.active { background: #5aa9f5; color: #e6f2ff; height: 22px; }
.search {
  position: relative; flex: none;
  width: 366px; height: 20px; padding-left: 4px;
  border: 1px solid #ccc; border-top: 0;
  color: #c4c4c4; line-height: 14px;
}
.search-ico { position: absolute; right: 11px; top: 0; }
.top-icons { flex: 1; display: flex; align-items: flex-start; border-bottom: 2px solid #e4e5e6; padding-left: 13px; gap: 12px; height: 22px; }
.help { font-size: 22px; line-height: 14px; color: #999; margin-left: -2px; }
.help-caret { border-top-color: #bbb; margin: 6px 0 0 -10px; }
.shirt { margin-left: 4px; }

/* ribbon */
.ribbon {
  display: flex; height: 146px;
  padding-top: 3px;
  background: linear-gradient(#fff 55%, #eceef0);
  border-bottom: 2px solid #b0b4b8;
}
.group { position: relative; flex: none; height: 138px; padding-top: 2px; border-right: 1px solid #d8dadc; }
.tools { display: grid; grid-auto-flow: column; grid-template-rows: repeat(3, 34.25px); justify-content: start; }
.tool { display: flex; align-items: center; height: 34.25px; white-space: nowrap; }
.tool .ico { width: 24px; height: 24px; flex: none; margin-right: 4px; }
.tool.on { background: #cfe0f4; height: 28px; margin: 3px 0 0 -5px; padding-left: 5px; width: 78px; }
.tool.disabled { color: #c0c0c0; }
.mini { font: 7px "Liberation Sans", sans-serif; fill: #5a9fe6; }
.glabel { position: absolute; left: 0; right: 0; top: 109px; height: 28px; display: flex; align-items: center; justify-content: center; }
.glabel.plain { top: 113px; }
.g1 { width: 265px; padding-left: 10px; }
.g1 .tools { grid-template-columns: 117px auto; }
.g2 { width: 291px; padding-left: 14px; }
.g2 .tools { grid-template-columns: 121px auto; }
.g3 { width: 414px; padding-left: 15px; }
.g3 .tools { grid-template-columns: 98px 167px auto; }
.g4 { width: 356px; padding-left: 14px; }
.g4 .tools { grid-template-columns: 82px 80px 81px auto; }
.g5 { width: 133px; padding-left: 14px; }
.g5 .tools { grid-template-columns: 79px auto; }
.g6 { width: 188px; padding-left: 14px; }
.g6 .tools { grid-template-columns: 134px auto; }
.g7 { width: 152px; padding-left: 12px; }
.g7 .tools { grid-template-columns: 48px 48px auto; }

/* combos */
.combo-row { display: flex; gap: 4px; height: 42px; padding: 5px 0 4px; background: #cdcfd3; border-bottom: 2px solid #b0b4b8; }
.combo { display: flex; align-items: center; justify-content: space-between; flex: none; height: 33px; padding: 0 8px 0 4px; background: #fff; }
.combo .caret { border-top-color: #666; }
.c1 { width: 144px; padding-left: 2px; }
.c2, .c3 { width: 146px; }
.c4 { width: 842px; }

/* workspace */
.workspace { display: flex; height: 651px; }
.nav-panel { flex: none; width: 307px; overflow: hidden; background: #fff; }
.pane-head { position: relative; height: 18px; background: #d2d4d8; }
.close { position: absolute; right: 6px; top: -3px; color: #888; font-size: 16px; font-weight: 700; line-height: 24px; }
.pane-title { height: 32px; padding-left: 7px; background: #eee; color: #999; line-height: 30px; font-weight: 500; border-bottom: 2px solid #ddd; }
.nav-tools { display: flex; align-items: center; gap: 6px; height: 42px; padding: 0 3px 0 5px; background: #eee; border-bottom: 2px solid #ddd; }
.sparkle { margin-right: auto; }
.view-btn { display: flex; align-items: center; justify-content: center; width: 36px; height: 33px; border: 1px solid #7ab8f0; border-radius: 4px; background: #e8f2fc; }
.tree { padding-top: 4px; }
.node, .leaf { display: flex; align-items: center; height: 36px; white-space: nowrap; }
.folder { width: 20px; height: 20px; margin-right: 9px; flex: none; }
.leaf { margin-left: 55px; padding-left: 5px; width: 104px; }
.leaf-ico { width: 22px; height: 24px; margin-right: 10px; flex: none; }
.leaf-ico.wide { width: 26px; margin-left: -2px; margin-right: 8px; }
.leaf.sel { background: #c9ddf2; height: 32px; margin-top: 2px; margin-bottom: 2px; }

.mid-panel { flex: none; width: 975px; margin-left: 8px; background: #fff; }
.ptabs { display: flex; height: 33px; background: #eee; border-bottom: 2px solid #ddd; }
.ptab { width: 97px; text-align: center; line-height: 30px; color: #aaa; background: #e2e2e2; border-right: 1px solid #eee; }
.ptab.active { color: #444; background: #eee; font-weight: 700; }
.list-tools { position: relative; height: 42px; background: #eee; border-bottom: 2px solid #ddd; }
.lt { position: absolute; top: 7px; display: flex; align-items: center; color: #555; }
.lt svg { margin-right: 8px; }
.lt.new { left: 10px; }
.lt.copy { left: 104px; }
.lt.copy svg { margin-right: 9px; }
.lt.del { left: 180px; }
.list-search { height: 28px; padding-left: 3px; color: #aaa; line-height: 26px; border-left: 1px solid #ccc; border-bottom: 2px solid #ddd; }
.clist { height: 238px; padding-top: 6px; border: 1px solid #ccc; border-top: 0; border-width: 0 1px 2px; }
.clist li { height: 36px; line-height: 36px; padding-left: 64px; }
.pane-head.second { margin-top: 8px; }
.prop-head { display: flex; height: 20px; background: #eee; color: #666; line-height: 34px; overflow: hidden; }
.prop-head span { border-right: 2px solid #ddd; text-align: center; }
.p0 { width: 34px; }
.p1 { width: 150px; }
.p2 { width: 300px; }

/* cad */
.cad { position: relative; flex: 1; min-width: 0; background: #000; overflow: hidden; }
.cad-svg { display: block; }
.cad-svg text { font-family: "Liberation Sans", sans-serif; font-size: 19px; }
.c-green { stroke: #00a000; fill: none; stroke-width: 1.2; }
.c-white { fill: #e6e6e6; }
.cad-svg .c-white .mid { font-size: 24px; }
.cad-svg .big { font-size: 28px; }
.cad-svg .small text { font-size: 13px; }
.c-red { fill: #e8635a; }
.c-teal { fill: #009a9a; }
.c-tan { fill: none; stroke: #b89a50; stroke-width: 1.300; }
.side-tools { position: absolute; right: 0; top: 0; width: 13px; height: 340px; background: #e4e6e9; }
.side-tools svg { display: block; }

/* bottom panel */
.grid-panel {
  position: absolute; left: 31px; top: 642px; right: -30px; bottom: 0;
  background: #fff;
  border-left: 8px solid #3e444c;
  border-top: 7px solid #3e444c;
}
.pane-head.tall { height: 18px; }
.gp-title { height: 33px; padding-left: 13px; background: #eee; color: #777; line-height: 33px; font-weight: 700; border-bottom: 2px solid #ddd; }
.gp-tools { display: flex; gap: 12px; height: 45px; padding: 0 0 0 8px; align-items: center; background: #eee; border-bottom: 2px solid #ddd; color: #333; }
.gp-tools .off { color: #bbb; }
.gp-table { width: 1856px; table-layout: fixed; border-collapse: collapse; background: #f0f0f0; }
.gp-table th { height: 25px; padding: 0; font-weight: 400; color: #444; line-height: 24px; border: 1px solid #ccc; border-top: 0; border-left: 0; white-space: nowrap; overflow: hidden; }
.gp-table thead tr:last-child th { border-bottom: 2px solid #ccc; }
.w61 { width: 61px; } .w62 { width: 62px; } .w91 { width: 91px; } .w92 { width: 92px; }
.w121 { width: 121px; } .w122 { width: 122px; } .w150 { width: 150px; } .w152 { width: 152px; }

/* dialog */
.dialog { position: absolute; left: 568px; top: 132px; width: 723px; height: 510px; background: #eee; box-shadow: 0 0 2px #999; }
.dlg-title { display: flex; justify-content: space-between; height: 41px; padding: 0 14px 0 14px; background: #2d7fe0; color: #dbeafc; line-height: 40px; border-bottom: 1px solid #8ebcf0; }
.dlg-x { color: #fff; font-size: 22px; font-weight: 500; line-height: 36px; }
.dlg-body { position: relative; padding: 16px 19px 0 18px; }
.dlg-list { position: relative; height: 386px; overflow: hidden; background: #fff; border: 1px solid #ccc; border-bottom-width: 2px; padding-top: 0; }
.drow { display: grid; grid-template-columns: 165px 135px 300px; height: 28.5px; width: 600px; line-height: 28.5px; color: #333; white-space: nowrap; }
.drow span { padding-left: 5px; }
.dhead { height: 32px; margin-bottom: -0.5px; line-height: 30px; background: #efefef; color: #555; border-bottom: 2px solid #ccc; border-right: 2px solid #ccc; }
.dhead span { padding: 0; text-align: center; border-right: 2px solid #ccc; }
.dhead span:last-child { border-right: 0; }
.thumb { position: absolute; left: 668px; top: 22px; width: 12px; height: 23px; border-radius: 6px; background: #cfd1d3; }
.dlg-btns { display: flex; justify-content: flex-end; gap: 10px; margin-top: 10px; }
.btn { width: 120px; height: 39px; padding: 0; border: 2px solid #d4d6d8; border-radius: 4px; background: #f2f2f2; color: #555; font: inherit; }
.btn.primary { width: 119px; border-color: #2d7fe0; background: #2d7fe0; color: #dbeafc; }
.dlg-grip { position: absolute; right: 4px; top: 446px; }
```
